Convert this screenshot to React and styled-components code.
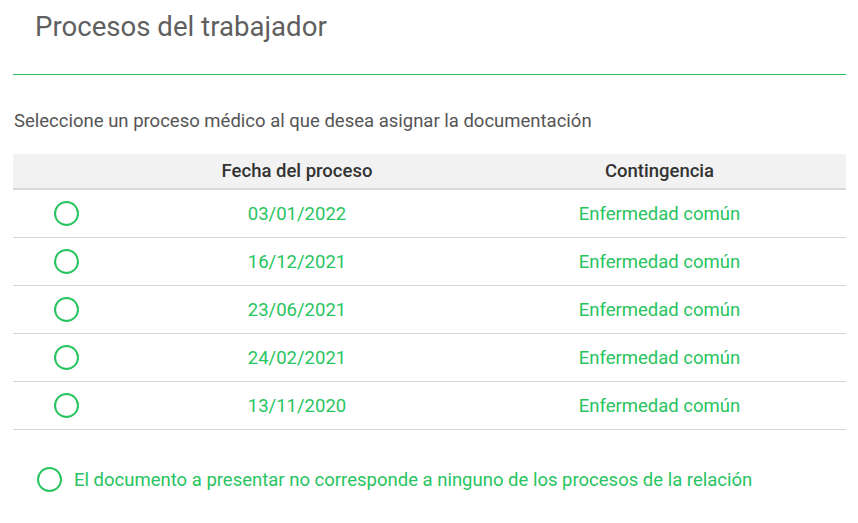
import React, { useState } from 'react'
import styled, { createGlobalStyle } from 'styled-components'

const GlobalStyle = createGlobalStyle`
    body {
        margin: 0;
        background: #ffffff;
        font-family: Roboto, "Noto Sans", sans-serif;
    }
`

const green = '#27c45f'

const Page = styled.div`
    width: 858px;
    padding: 0 12px 0 13px;
    box-sizing: border-box;
`

const Title = styled.h1`
    margin: 0;
    padding: 10px 0 0 22px;
    height: 75px;
    box-sizing: border-box;
    font-size: 27.6px;
    font-weight: 400;
    color: #5f5f5f;
    border-bottom: 1.5px solid ${green};
`

const Lead = styled.p`
    margin: 35px 0 22px 1px;
    font-size: 18.5px;
    color: #555555;
`

const Table = styled.table`
    width: 100%;
    border-collapse: collapse;
    font-size: 18.5px;
`

const HeadCell = styled.th`
    height: 34px;
    padding: 0;
    background: #f2f2f2;
    border-bottom: 2px solid #d9d9d9;
    font-weight: 500;
    color: #333333;
    text-align: center;
    width: ${p => p.$w || 'auto'};
`

const Cell = styled.td`
    height: 47px;
    padding: 0;
    border-bottom: 1px solid #d4d4d4;
    color: ${green};
    text-align: center;
`

const RadioCell = styled(Cell)`
    padding-left: 41px;
    text-align: left;
`

const Radio = styled.span`
    display: inline-block;
    flex-shrink: 0;
    width: 21px;
    height: 21px;
    border: 2.5px solid ${green};
    border-radius: 50%;
    vertical-align: middle;
    cursor: pointer;
    background: ${p => p.$checked ? `radial-gradient(${green} 0 45%, transparent 50%)` : 'transparent'};
`

const Option = styled.label`
    display: flex;
    align-items: center;
    gap: 12px;
    margin: 37px 0 0 24px;
    font-size: 18.5px;
    color: ${green};
    cursor: pointer;
`

const procesos = [
    { fecha: '03/01/2022', contingencia: 'Enfermedad común' },
    { fecha: '16/12/2021', contingencia: 'Enfermedad común' },
    { fecha: '23/06/2021', contingencia: 'Enfermedad común' },
    { fecha: '24/02/2021', contingencia: 'Enfermedad común' },
    { fecha: '13/11/2020', contingencia: 'Enfermedad común' },
]

const App = () => {
    const [selected, setSelected] = useState(null)

    return (
        <Page>
            <GlobalStyle />
            <Title>Procesos del trabajador</Title>
            <Lead>Seleccione un proceso médico al que desea asignar la documentación</Lead>
            <Table>
                <thead>
                    <tr>
                        <HeadCell $w="108px"></HeadCell>
                        <HeadCell $w="352px">Fecha del proceso</HeadCell>
                        <HeadCell>Contingencia</HeadCell>
                    </tr>
                </thead>
                <tbody>
                    {procesos.map((p, i) => (
                        <tr key={p.fecha} onClick={() => setSelected(i)}>
                            <RadioCell><Radio $checked={selected === i} /></RadioCell>
                            <Cell>{p.fecha}</Cell>
                            <Cell>{p.contingencia}</Cell>
                        </tr>
                    ))}
                </tbody>
            </Table>
            <Option onClick={() => setSelected('none')}>
                <Radio $checked={selected === 'none'} />
                El documento a presentar no corresponde a ninguno de los procesos de la relación
            </Option>
        </Page>
    )
}

export default App
